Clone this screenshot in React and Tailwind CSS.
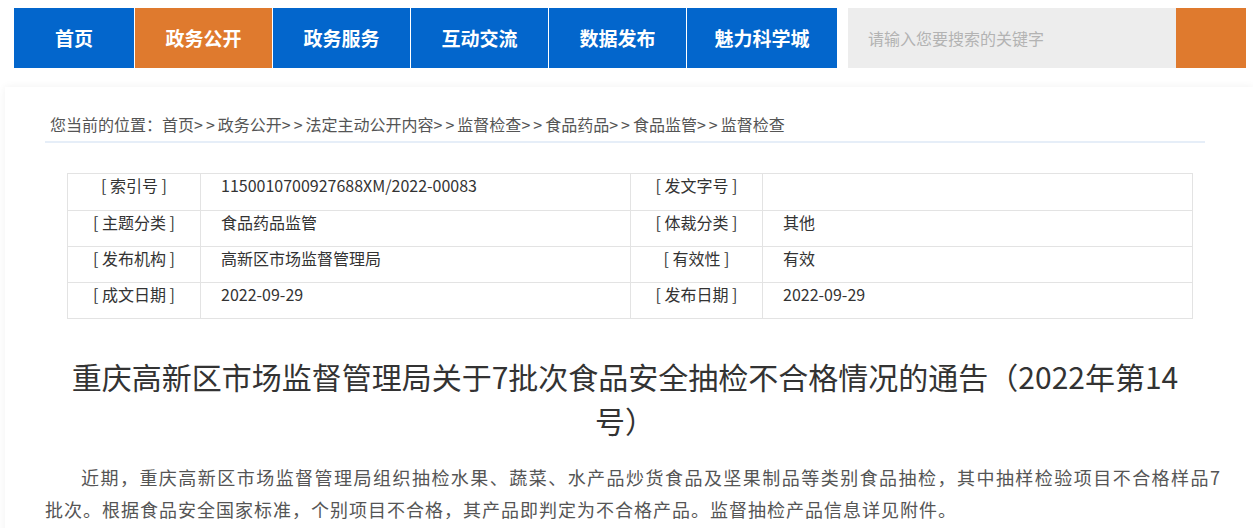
import React from 'react';

const navItems = [
  { label: '首页', width: 'w-[120px]' },
  { label: '政务公开', width: 'w-[137px]', active: true },
  { label: '政务服务', width: 'w-[137px]' },
  { label: '互动交流', width: 'w-[137px]' },
  { label: '数据发布', width: 'w-[137px]' },
  { label: '魅力科学城', width: 'w-[150px]' },
];

const crumbs = ['首页', '政务公开', '法定主动公开内容', '监督检查', '食品药品', '食品监管', '监督检查'];

const rows = [
  ['[ 索引号 ]', '1150010700927688XM/2022-00083', '[ 发文字号 ]', ''],
  ['[ 主题分类 ]', '食品药品监管', '[ 体裁分类 ]', '其他'],
  ['[ 发布机构 ]', '高新区市场监督管理局', '[ 有效性 ]', '有效'],
  ['[ 成文日期 ]', '2022-09-29', '[ 发布日期 ]', '2022-09-29'],
];

const Header = () => (
  <div className="flex items-start pl-[14px] pt-[8px]">
    <nav className="flex gap-px">
      {navItems.map((item) => (
        <a
          key={item.label}
          href="#"
          className={`${item.width} h-[60px] flex items-center justify-center text-[19px] font-bold text-white ${
            item.active ? 'bg-[#df7a2e]' : 'bg-[#0366cc]'
          }`}
        >
          {item.label}
        </a>
      ))}
    </nav>
    <div className="ml-[11px] flex h-[60px]">
      <input
        type="text"
        placeholder="请输入您要搜索的关键字"
        className="w-[328px] h-full bg-[#ededed] pl-[20px] text-[16px] text-[#666] outline-none placeholder:text-[#b3b3b3]"
      />
      <button type="button" className="w-[70px] h-full bg-[#df7a2e]" aria-label="搜索" />
    </div>
  </div>
);

const InfoTable = () => (
  <div className="ml-[22px] w-[1126px] border border-[#e3e3e3] text-[16px] text-[#333]">
    {rows.map((row, i) => (
      <div
        key={i}
        className={`grid grid-cols-[132px_430px_132px_1fr] h-[36px] ${i > 0 ? 'border-t border-[#e3e3e3]' : ''}`}
      >
        <div className="text-center leading-[22px]">{row[0]}</div>
        <div className="border-l border-[#e3e3e3] pl-[20px] leading-[22px]">{row[1]}</div>
        <div className="border-l border-[#e3e3e3] text-center leading-[22px]">{row[2]}</div>
        <div className="border-l border-[#e3e3e3] pl-[20px] leading-[22px]">{row[3]}</div>
      </div>
    ))}
  </div>
);

export default function App() {
  return (
    <div className="w-[1253px] h-[528px] overflow-hidden bg-white font-['Noto_Sans_CJK_SC','Noto_Sans',sans-serif]">
      <Header />

      <div className="mt-[19px] ml-[5px] min-h-[600px] bg-white shadow-[0_0_8px_rgba(0,0,0,0.06)] pl-[40px] pt-[25px]">
        {/* breadcrumb */}
        <div className="w-[1160px] border-b-2 border-[#e6eef8] pl-[5px] pb-[5px] text-[16px] leading-[24px] text-[#555]">
          您当前的位置：
          {crumbs.map((c, i) => (
            <span key={i}>
              {i > 0 && <span className="tracking-[3px]">&gt;&gt;</span>}
              {c}
            </span>
          ))}
        </div>

        <div className="mt-[30px]">
          <InfoTable />
        </div>

        <h1 className="mt-[35px] w-[1160px] px-[20px] text-center text-[30px] leading-[44px] font-normal text-[#333]">
          重庆高新区市场监督管理局关于7批次食品安全抽检不合格情况的通告（2022年第14号）
        </h1>

        <p className="mt-[19px] w-[1176px] text-justify indent-[36px] text-[18px] tracking-[1px] leading-[32px] text-[#555]">
          近期，重庆高新区市场监督管理局组织抽检水果、蔬菜、水产品炒货食品及坚果制品等类别食品抽检，其中抽样检验项目不合格样品7
          <span className="whitespace-nowrap">批次。</span>
          根据食品安全国家标准，个别项目不合格，其产品即判定为不合格产品。监督抽检产品信息详见附件。
        </p>
      </div>
    </div>
  );
}
